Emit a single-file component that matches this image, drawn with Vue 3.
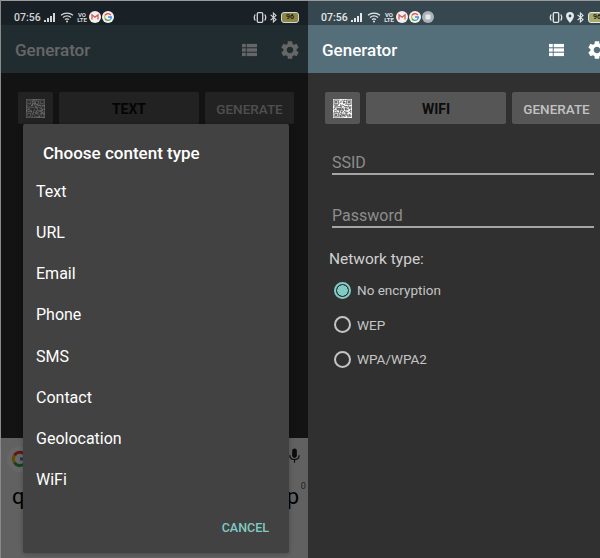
<script setup>
const phones = [
  { id: 'left', dialog: true, label: 'TEXT', extraIcon: false },
  { id: 'right', dialog: false, label: 'WIFI', extraIcon: true },
]
const items = ['Text', 'URL', 'Email', 'Phone', 'SMS', 'Contact', 'Geolocation', 'WiFi']
const radios = [
  { label: 'No encryption', on: true },
  { label: 'WEP', on: false },
  { label: 'WPA/WPA2', on: false },
]
const gearPath =
  'M19.14 12.94c.04-.3.06-.61.06-.94 0-.32-.02-.64-.07-.94l2.03-1.58a.49.49 0 0 0 .12-.61l-1.92-3.32a.488.488 0 0 0-.59-.22l-2.39.96c-.5-.38-1.03-.7-1.62-.94l-.36-2.54a.484.484 0 0 0-.48-.41h-3.84c-.24 0-.43.17-.47.41l-.36 2.54c-.59.24-1.13.57-1.62.94l-2.39-.96c-.22-.08-.47 0-.59.22L2.74 8.87c-.12.21-.08.47.12.61l2.03 1.58c-.05.3-.09.63-.09.94s.02.64.07.94l-2.03 1.58a.49.49 0 0 0-.12.61l1.92 3.32c.12.22.37.29.59.22l2.39-.96c.5.38 1.03.7 1.62.94l.36 2.54c.05.24.24.41.48.41h3.84c.24 0 .44-.17.47-.41l.36-2.54c.59-.24 1.13-.56 1.62-.94l2.39.96c.22.08.47 0 .59-.22l1.92-3.32c.12-.22.07-.47-.12-.61l-2.01-1.58zM12 15.6c-1.98 0-3.6-1.62-3.6-3.6s1.62-3.6 3.6-3.6 3.6 1.62 3.6 3.6-1.62 3.6-3.6 3.6z'

// Fixed QR module map: finder squares plus a deterministic scatter.
const qrCells = []
const size = 25
const inFinder = (x, y) => (x < 8 && y < 8) || (x > 16 && y < 8) || (x < 8 && y > 16)
const finderOn = (a, b) => {
  const m = Math.max(Math.abs(a - 3), Math.abs(b - 3))
  return m !== 2 && m <= 3
}
const scatter = (x, y) => {
  const v = Math.sin(x * 12.9898 + y * 78.233) * 43758.5453
  return v - Math.floor(v) < 0.48
}
for (let y = 0; y < size; y++) {
  for (let x = 0; x < size; x++) {
    const on = inFinder(x, y)
      ? finderOn(x > 16 ? x - 18 : x, y > 16 ? y - 18 : y)
      : scatter(x, y)
    if (on) qrCells.push({ x, y })
  }
}
</script>

<template>
  <div class="screen">
    <section v-for="p in phones" :key="p.id" class="phone" :class="p.id">
      <header class="status">
        <span class="clock">07:56</span>
        <svg class="signal" width="13" height="9" viewBox="0 0 13 9">
          <rect x="0" y="7" width="2" height="2" />
          <rect x="3" y="5" width="2" height="4" />
          <rect x="6" y="3" width="2" height="6" />
          <rect x="9" y="0" width="2" height="9" />
        </svg>
        <svg class="wifi" width="14" height="11" viewBox="0 0 14 11" fill="none">
          <path d="M1 3.2C4.5 .4 9.5 .4 13 3.2" />
          <path d="M3 5.4C5.3 3.6 8.7 3.6 11 5.4" />
          <path d="M5 7.6C6.2 6.7 7.8 6.7 9 7.6" />
          <circle cx="7" cy="9.6" r="1" class="dot" />
        </svg>
        <span class="volte"><span>VO</span><span>LTE</span></span>
        <svg class="notif first" width="12" height="12" viewBox="0 0 12 12">
          <circle cx="6" cy="6" r="6" fill="#f1f1f1" />
          <path d="M3 8.5V3.8L6 6.2 9 3.8V8.5" fill="none" stroke="#d9574a" stroke-width="1.3" />
        </svg>
        <svg class="notif" width="12" height="12" viewBox="0 0 12 12">
          <circle cx="6" cy="6" r="6" fill="#f1f1f1" />
          <path d="M8.8 4.2A3.3 3.3 0 0 0 3 4.4" fill="none" stroke="#e0483c" stroke-width="1.3" />
          <path d="M3 4.4A3.3 3.3 0 0 0 3 7.6" fill="none" stroke="#e9b52f" stroke-width="1.3" />
          <path d="M3 7.6A3.3 3.3 0 0 0 8.7 8" fill="none" stroke="#3aa757" stroke-width="1.3" />
          <path d="M6 6H9.3A3.3 3.3 0 0 1 8.7 8" fill="none" stroke="#4285f4" stroke-width="1.3" />
        </svg>
        <svg v-if="p.extraIcon" class="notif" width="12" height="12" viewBox="0 0 12 12">
          <circle cx="6" cy="6" r="6" fill="#aab2b5" />
          <rect x="3.5" y="3.5" width="5" height="5" rx="1" fill="#e6e9ea" />
        </svg>

        <span class="status-space"></span>

        <svg class="vibrate" width="14" height="11" viewBox="0 0 14 11" fill="none">
          <rect x="4.3" y="0.7" width="5.4" height="9.6" rx="1" />
          <path d="M2.2 2.5C1 4.5 1 6.5 2.2 8.5M11.8 2.5C13 4.5 13 6.5 11.8 8.5" />
        </svg>
        <svg v-if="p.extraIcon" class="pin" width="8" height="11" viewBox="0 0 8 11">
          <path d="M4 0a4 4 0 0 1 4 4c0 2.5-2.5 5-4 7-1.5-2-4-4.5-4-7a4 4 0 0 1 4-4zm0 2.6a1.4 1.4 0 1 0 0 2.8 1.4 1.4 0 0 0 0-2.8z" fill-rule="evenodd" />
        </svg>
        <svg class="bt" width="7" height="11" viewBox="0 0 7 11" fill="none">
          <path d="M.6 2.9L6 7.6 3.4 10V1L6 3.4.6 8.1" />
        </svg>
        <span class="battery"><span>96</span></span>
      </header>

      <div class="appbar">
        <h1 class="title">Generator</h1>
        <svg class="list-icon" width="15" height="14" viewBox="0 0 16 14">
          <rect x="0" y="0.5" width="4" height="3.6" />
          <rect x="5" y="0.5" width="11" height="3.6" />
          <rect x="0" y="5.2" width="4" height="3.6" />
          <rect x="5" y="5.2" width="11" height="3.6" />
          <rect x="0" y="9.9" width="4" height="3.6" />
          <rect x="5" y="9.9" width="11" height="3.6" />
        </svg>
        <svg class="gear-icon" width="22" height="22" viewBox="0 0 24 24">
          <path :d="gearPath" />
        </svg>
      </div>

      <main class="content">
        <div class="toolbar">
          <button class="btn qr-btn" type="button">
            <svg class="qr" width="19" height="19" viewBox="-1 -1 27 27">
              <rect x="-1" y="-1" width="27" height="27" fill="#fff" />
              <rect v-for="c in qrCells" :key="c.x + '-' + c.y" :x="c.x" :y="c.y" width="1" height="1" fill="#222" />
            </svg>
          </button>
          <button class="btn type-btn" type="button">{{ p.label }}</button>
          <button class="btn gen-btn" type="button">GENERATE</button>
        </div>

        <form v-if="!p.dialog" class="form">
          <div class="field">SSID</div>
          <div class="field">Password</div>
          <div class="net-label">Network type:</div>
          <div class="radios">
            <label v-for="r in radios" :key="r.label" class="radio">
              <span class="ring" :class="{ on: r.on }"></span>
              <span>{{ r.label }}</span>
            </label>
          </div>
        </form>
      </main>

      <div v-if="p.dialog" class="keyboard">
        <div class="kb-top">
          <svg class="g-badge" width="26" height="26" viewBox="0 0 26 26">
            <circle cx="13" cy="13" r="13" fill="#fff" />
            <path d="M18.6 9.5A6.5 6.5 0 0 0 7.4 9.5" fill="none" stroke="#ea4335" stroke-width="3" />
            <path d="M7.4 9.5A6.5 6.5 0 0 0 7.4 16.5" fill="none" stroke="#fbbc05" stroke-width="3" />
            <path d="M7.4 16.5A6.5 6.5 0 0 0 18 17.2" fill="none" stroke="#34a853" stroke-width="3" />
            <path d="M13 13H19.5A6.5 6.5 0 0 1 18 17.2" fill="none" stroke="#4285f4" stroke-width="3" />
          </svg>
          <svg class="mic" width="11" height="16" viewBox="0 0 14 19">
            <rect x="4" y="0" width="6" height="12" rx="3" />
            <path d="M1 8.5C1 12 3.8 14 7 14s6-2 6-5.5M7 14v4" fill="none" stroke="#1c1c1c" stroke-width="1.5" />
          </svg>
        </div>
        <div class="kb-keys">
          <span>q</span>
          <span class="p-key">p<sup>0</sup></span>
        </div>
      </div>

      <template v-if="p.dialog">
        <div class="scrim"></div>
        <div class="dialog">
          <h2 class="dialog-title">Choose content type</h2>
          <ul class="dialog-list">
            <li v-for="item in items" :key="item">{{ item }}</li>
          </ul>
          <div class="dialog-actions">CANCEL</div>
        </div>
      </template>
    </section>
  </div>
</template>

<style>
html, body { margin: 0; background: #333; }
</style>

<style scoped>
.screen {
  width: 600px;
  height: 558px;
  overflow: hidden;
  display: flex;
  box-sizing: border-box;
  border-left: 1px solid #8a8a8a;
  background: #303030;
  font-family: Roboto, "Liberation Sans", sans-serif;
}
.phone {
  position: relative;
  flex: 0 0 307px;
  width: 307px;
  height: 558px;
  display: flex;
  flex-direction: column;
  box-sizing: border-box;
  border-top: 1px solid #9a9a9a;
  overflow: hidden;
}

.status {
  position: relative;
  z-index: 3;
  height: 24px;
  display: flex;
  align-items: center;
  padding: 8px 9px 0 13px;
  flex: none;
  box-sizing: border-box;
  color: #d2d4d5;
  background: #1a2126;
}
.right .status { background: #37474f; color: #e4e8ea; }
.clock { font-size: 10.5px; font-weight: 500; width: 30px; }
.signal { fill: currentColor; margin-right: 3px; }
.wifi { stroke: currentColor; stroke-width: 1.3; margin-right: 3px; }
.wifi .dot { fill: currentColor; stroke: none; }
.volte {
  display: flex;
  flex-direction: column;
  font-size: 6px;
  line-height: 5.5px;
  font-weight: 700;
  width: 10px;
  align-items: center;
  margin-right: 2px;
}
.notif { margin-right: 1px; }
.status-space { flex: 1; }
.vibrate { stroke: currentColor; stroke-width: 1.3; margin-right: 3px; }
.pin { fill: currentColor; margin-right: 3px; }
.bt { stroke: currentColor; stroke-width: 1.1; margin-right: 4px; }
.battery {
  width: 16px;
  height: 9px;
  border: 1px solid currentColor;
  border-radius: 3px;
  color: #1c1c1c;
  font-size: 7px;
  font-weight: 700;
  line-height: 9px;
  text-align: center;
}
.left .battery { background: #8d8745; border-color: #d2d4d5; }
.right .battery { background: #a7ab6d; border-color: #e4e8ea; }

.appbar {
  flex: none;
  height: 48px;
  display: flex;
  align-items: center;
  padding: 2px 7px 0 14px;
  box-sizing: border-box;
  background: #546e7a;
}
.title {
  flex: 1;
  margin: 0;
  font-size: 17px;
  font-weight: 500;
  color: #fff;
}
.list-icon { fill: #fff; margin-right: 22px; }
.gear-icon { fill: #fff; }

.content {
  flex: 1;
  background: #303030;
  padding: 19px 14px 0 17px;
  min-height: 0;
}
.toolbar {
  display: flex;
  gap: 6px;
  height: 32px;
}
.btn {
  border: 0;
  padding: 1px 0 0;
  background: #565656;
  border-radius: 2px;
  font-family: inherit;
  font-size: 14px;
  font-weight: 500;
  letter-spacing: 0;
}
.qr-btn {
  flex: 0 0 35px;
  padding: 0;
  display: flex;
  align-items: center;
  justify-content: center;
}
.type-btn { flex: 1; color: #0c0c0c; font-weight: 700; }
.gen-btn { flex: 0 0 89px; color: #c2c2c2; font-size: 13.5px; }

.form { padding-top: 26px; }
.field {
  height: 23px;
  margin: 0 7px 28px 7px;
  border-bottom: 2px solid #a5a5a5;
  color: #8d8d8d;
  font-size: 16px;
  line-height: 26px;
}
.net-label {
  margin: -7px 0 0 4px;
  color: #d0d0d0;
  font-size: 15.5px;
  line-height: 20px;
}
.radios {
  margin-top: 4px;
  display: flex;
  flex-direction: column;
}
.radio {
  height: 34.5px;
  display: flex;
  align-items: center;
  gap: 6px;
  margin-left: 9px;
  color: #c4c4c4;
  font-size: 13.5px;
}
.ring {
  box-sizing: border-box;
  width: 17px;
  height: 17px;
  border: 2px solid #c4c4c4;
  border-radius: 50%;
  flex: none;
}
.ring.on {
  border-color: #80cbc4;
  background: radial-gradient(circle, #80cbc4 0 5px, transparent 5.5px);
}

.keyboard {
  flex: none;
  height: 120px;
  background: #f2f2f2;
  display: flex;
  flex-direction: column;
  box-sizing: border-box;
}
.kb-top {
  flex: none;
  height: 46px;
  display: flex;
  align-items: flex-start;
  justify-content: space-between;
  padding: 8px 8px 0 6px;
  box-sizing: border-box;
}
.mic { fill: #1c1c1c; margin-top: 2px; }
.kb-keys {
  display: flex;
  justify-content: space-between;
  font-size: 22px;
  line-height: 26px;
  color: #000;
  padding: 0 9px 0 11px;
}
.p-key { position: relative; }
.p-key sup {
  position: absolute;
  left: 14px;
  top: -4px;
  font-size: 9px;
  color: #555;
  line-height: 12px;
}

.scrim {
  position: absolute;
  inset: 0;
  z-index: 2;
  background: rgba(0, 0, 0, 0.6);
}
.dialog {
  position: absolute;
  z-index: 4;
  left: 22px;
  top: 123px;
  width: 266px;
  height: 429px;
  background: #424242;
  border-radius: 2px;
  display: flex;
  flex-direction: column;
  box-shadow: 0 1px 4px rgba(0, 0, 0, 0.25);
}
.dialog-title {
  margin: 17px 0 0 20px;
  color: #fff;
  font-size: 17px;
  font-weight: 500;
  line-height: 24px;
}
.dialog-list {
  list-style: none;
  margin: 6px 0 0;
  padding: 0;
}
.dialog-list li {
  height: 41.15px;
  line-height: 41.15px;
  padding-left: 13px;
  color: #fff;
  font-size: 16px;
}
.dialog-actions {
  margin: auto 20px 18px 0;
  text-align: right;
  color: #80cbc4;
  font-size: 12.5px;
  font-weight: 500;
}
</style>
